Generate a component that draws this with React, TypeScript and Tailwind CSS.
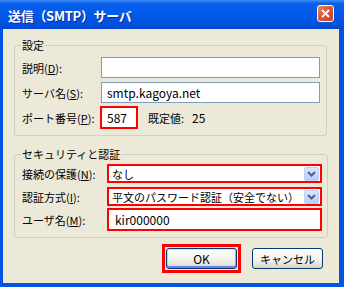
import React from "react";

const ui = "font-['Noto_Sans_CJK_JP','Liberation_Sans',sans-serif] text-[11px] leading-[14px] text-black";

function Chevron() {
  return (
    <svg width="9" height="6" viewBox="0 0 9 6">
      <path d="M1 1 L4.5 4.5 L8 1" fill="none" stroke="#4d6185" strokeWidth="2" />
    </svg>
  );
}

function Combo({ text }: { text: string }) {
  return (
    <div className="flex h-[19px] w-[215px] items-center border-2 border-[#ff0000] bg-white pl-[3px] pr-[1px]">
      <span className="flex-1 whitespace-nowrap">{text}</span>
      <div className="flex h-[14px] w-[15px] items-center justify-center rounded-[2px] border border-[#bccff7] bg-[linear-gradient(to_bottom,#dce6fd,#b7ccf9)]">
        <Chevron />
      </div>
    </div>
  );
}

function Label({ text, k, width }: { text: string; k: string; width: string }) {
  return (
    <div className={`${width} shrink-0 whitespace-nowrap`}>
      {text}(<u>{k}</u>):
    </div>
  );
}

export default function App() {
  return (
    <div className={`flex h-[287px] w-[344px] flex-col overflow-hidden ${ui}`}>
      {/* タイトルバー */}
      <div className="flex h-[29px] shrink-0 items-start bg-[linear-gradient(to_bottom,#3d8ff7_0%,#0a60ec_12%,#0058e8_55%,#0050dc_88%,#0745c6_100%)] pl-[8px] pr-[10px]">
        <div className="mt-[8px] flex-1 text-[13px] font-bold leading-[15px] tracking-[-0.3px] text-white [text-shadow:1px_1px_0_#0b2a9a]">
          送信（SMTP）サーバ
        </div>
        <div className="mt-[5px] flex h-[17px] w-[17px] items-center justify-center rounded-[3px] border border-white bg-[linear-gradient(135deg,#f08a68,#e0552e_45%,#c9421c)]">
          <svg width="9" height="9" viewBox="0 0 9 9">
            <path d="M1 1 L8 8 M8 1 L1 8" stroke="white" strokeWidth="2" />
          </svg>
        </div>
      </div>

      {/* 本体 */}
      <div className="flex flex-1 flex-col border-b-[4px] border-l-[3px] border-r-[5px] border-[#0055e5] bg-[#ece9d8] pl-[11px] pr-[12px] pt-[9px]">
        <fieldset className="rounded-[3px] border border-[#d0d0bf] pb-[7px] pl-[7px] pr-[6px] pt-[5px]">
          <legend className="ml-[-1px] px-[1px]">設定</legend>
          <div className="flex flex-col gap-[4px]">
            <div className="flex h-[21px] items-center">
              <Label text="説明" k="D" width="w-[79px]" />
              <div className="h-[21px] flex-1 border border-[#7f9db9] bg-white" />
            </div>
            <div className="flex h-[21px] items-center">
              <Label text="サーバ名" k="S" width="w-[79px]" />
              <div className="flex h-[21px] flex-1 items-center border border-[#7f9db9] bg-white pl-[5px] text-[12px]">
                smtp.kagoya.net
              </div>
            </div>
            <div className="flex h-[21px] items-center">
              <Label text="ポート番号" k="P" width="w-[78px]" />
              <div className="flex h-[23px] w-[38px] items-center border-2 border-[#ff0000] bg-white pl-[5px] text-[12px]">
                587
              </div>
              <span className="ml-[10px]">既定値:</span>
              <span className="ml-[8px] text-[12px]">25</span>
            </div>
          </div>
        </fieldset>

        <fieldset className="mt-[11px] rounded-[3px] border border-[#d0d0bf] pb-[6px] pl-[7px] pr-[5px] pt-[3px]">
          <legend className="ml-[-1px] px-[1px]">セキュリティと認証</legend>
          <div className="flex flex-col">
            <div className="flex h-[19px] items-center">
              <Label text="接続の保護" k="N" width="w-[85px]" />
              <Combo text="なし" />
            </div>
            <div className="mt-[4px] flex h-[19px] items-center">
              <Label text="認証方式" k="I" width="w-[85px]" />
              <Combo text="平文のパスワード認証（安全でない）" />
            </div>
            <div className="mt-[2px] flex h-[23px] items-center">
              <Label text="ユーザ名" k="M" width="w-[85px]" />
              <div className="flex h-[23px] w-[215px] items-center border-2 border-[#ff0000] bg-white pl-[6px] text-[12px]">
                kir000000
              </div>
            </div>
          </div>
        </fieldset>

        <div className="mr-[4px] mt-[6px] flex items-center justify-end">
          <div className="border-[3px] border-[#ff0000] p-[1px]">
            <button className="flex h-[21px] w-[71px] items-center justify-center rounded-[3px] border border-[#003c74] bg-[linear-gradient(to_bottom,#ffffff,#f0f0ea_60%,#dcd8cc)] text-[12px] shadow-[inset_0_1px_0_#cee7ff,inset_0_-2px_0_#6982ee,inset_1px_0_0_#b8d4fa,inset_-1px_0_0_#8ab0f0]">
              OK
            </button>
          </div>
          <button className="ml-[11px] flex h-[21px] w-[71px] items-center justify-center rounded-[3px] border border-[#003c74] bg-[linear-gradient(to_bottom,#ffffff,#f2f1ec_60%,#d9d5c9)]">
            キャンセル
          </button>
        </div>
      </div>
    </div>
  );
}
